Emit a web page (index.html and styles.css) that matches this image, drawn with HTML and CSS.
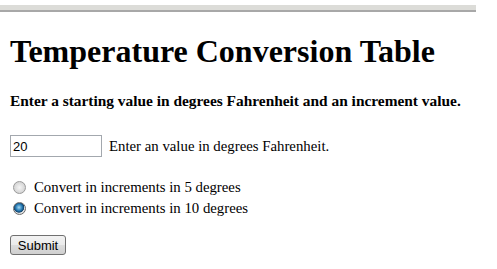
FILE: index.html
```html
<!DOCTYPE html>
<html lang="en">
<head>
    <meta charset="UTF-8">
    <title>Temperature Conversion Table</title>
    <link rel="stylesheet" href="styles.css">
</head>
<body>

<div class="top-bar"></div>

<div class="page">
    <h1>Temperature Conversion Table</h1>
    <h3 class="intro">Enter a starting value in degrees Fahrenheit and an increment value.</h3>

    <form class="convert-form">
        <div class="start-row">
            <input type="text" class="start-input" value="20">
            <span>Enter an value in degrees Fahrenheit.</span>
        </div>

        <div class="increments">
            <label class="radio-row"><input type="radio" name="step" value="5"> Convert in increments in 5 degrees</label>
            <label class="radio-row"><input type="radio" name="step" value="10" checked> Convert in increments in 10 degrees</label>
        </div>

        <div class="submit-row">
            <button type="button" class="submit-button">Submit</button>
        </div>
    </form>
</div>

</body>
</html>
```

FILE: styles.css
```css
body {
    margin: 0;
    padding: 0;
    background-color: #ffffff;
    color: #000000;
    font-family: "Liberation Serif", "Times New Roman", serif;
    font-size: 14.8px;
}

.top-bar {
    margin-top: 5px;
    width: 476px;
    height: 5px;
    background-color: #dcdcd8;
    border-bottom: 2px solid #a8a8a8;
}

.page {
    padding: 0 10px;
}

h1 {
    margin: 21px 0 0 0;
    font-size: 32px;
    line-height: 37px;
    font-weight: bold;
}

.intro {
    margin: 22px 0 0 0;
    font-size: 15.4px;
    line-height: 18px;
    font-weight: bold;
}

.start-row {
    margin-top: 25px;
    display: flex;
    align-items: center;
    gap: 7px;
    height: 22px;
}

.start-input {
    box-sizing: border-box;
    width: 92px;
    height: 22px;
    margin: 0;
    padding: 1px 2px;
    border: 1px solid #a3a8ae;
    font-family: "Liberation Sans", Arial, sans-serif;
    font-size: 13px;
    color: #000000;
}

.increments {
    margin-top: 20px;
    display: flex;
    flex-direction: column;
}

.radio-row {
    display: flex;
    align-items: center;
    height: 21px;
}

.radio-row input {
    appearance: none;
    box-sizing: border-box;
    width: 13px;
    height: 13px;
    margin: 0 8px 0 3px;
    border: 1px solid #9a9a9a;
    border-radius: 50%;
    background: radial-gradient(circle at 50% 50%, #f4f4f4 0, #dcdcdc 55%, #c8c8c8 100%);
}

.radio-row input:checked {
    border-color: #6b6b6b;
    background: radial-gradient(circle at 45% 40%, #a6d8f2 0, #2a7fb8 35%, #12436c 55%, #e6e6e6 62%, #cfcfcf 100%);
}

.submit-row {
    margin-top: 16px;
}

.submit-button {
    box-sizing: border-box;
    width: 56px;
    height: 20px;
    margin: 0;
    padding: 0;
    border: 1px solid #707070;
    border-radius: 3px;
    background: linear-gradient(#f2f2f2, #ebebeb 50%, #dddddd 51%, #cfcfcf);
    font-family: "Liberation Sans", Arial, sans-serif;
    font-size: 13px;
    color: #000000;
}
```
